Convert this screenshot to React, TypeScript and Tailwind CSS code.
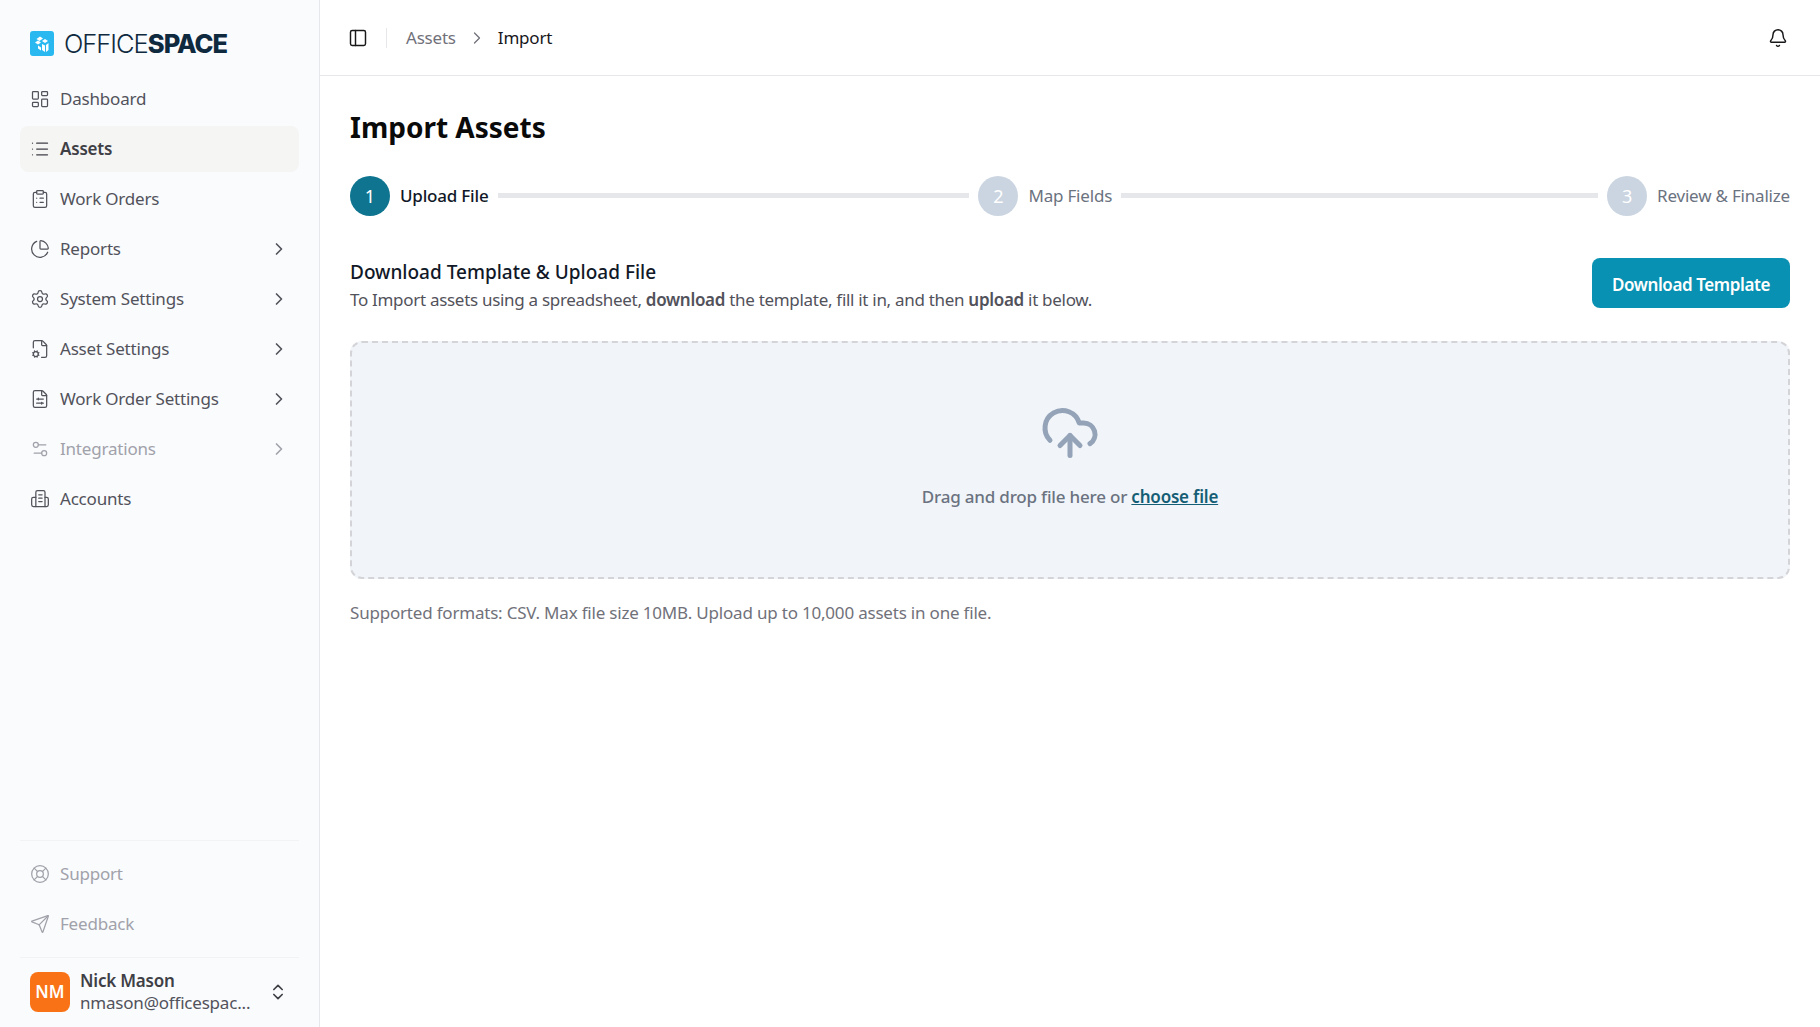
import {
  Bell,
  ChevronRight,
  ChevronsUpDown,
  ClipboardList,
  CloudUpload,
  FileCog,
  FileSliders,
  LayoutDashboard,
  LifeBuoy,
  List,
  PanelLeft,
  PieChart,
  Send,
  Settings,
  Settings2,
} from 'lucide-react';

function AccountsIcon({ className }: { className?: string }) {
  return (
    <svg viewBox="0 0 24 24" className={className} fill="none" stroke="currentColor" strokeWidth={1.5} strokeLinecap="round" strokeLinejoin="round">
      <path d="M7 21V4a2 2 0 0 1 2-2h7a2 2 0 0 1 2 2v17z" />
      <path d="M7 10H4a2 2 0 0 0-2 2v7a2 2 0 0 0 2 2h3" />
      <path d="M18 10h2a2 2 0 0 1 2 2v7a2 2 0 0 1-2 2h-2" />
      <path d="M10.5 7h4M10.5 11h4M10.5 15h4" />
    </svg>
  );
}

const navItems = [
  { label: 'Dashboard', icon: LayoutDashboard },
  { label: 'Assets', icon: List, active: true },
  { label: 'Work Orders', icon: ClipboardList },
  { label: 'Reports', icon: PieChart, arrow: true },
  { label: 'System Settings', icon: Settings, arrow: true },
  { label: 'Asset Settings', icon: FileCog, arrow: true },
  { label: 'Work Order Settings', icon: FileSliders, arrow: true },
  { label: 'Integrations', icon: Settings2, arrow: true, muted: true },
  { label: 'Accounts', icon: AccountsIcon },
];

function Logo() {
  return (
    <div className="flex h-[25px] items-center gap-[10px] pl-[30px]">
      <div className="flex h-[25px] w-[24px] items-center justify-center rounded-[3px] bg-[#29b9f0]">
        <svg viewBox="0 0 16 18" className="h-[18px] w-[16px]" fill="#fff">
          <path d="M2.5 4 6 1.5 9 3.5 5.5 6z" />
          <path d="M1 7.5 4 5.5 7 7.5 4 9.5z" />
          <path d="M8 6l3-2 3 2-3 2z" />
          <path d="M4 10.5l3 2v3l-3-2z" />
          <path d="M8 9l3 1.5v6.5L8 15z" />
          <path d="M12 10l2.5-2v7L12 17z" />
        </svg>
      </div>
      <div className="flex text-[25.5px] leading-none tracking-[-1px] text-[#0f2a3f] font-['Inter',sans-serif]">
        <span className="font-light">OFFICE</span>
        <span className="font-extrabold">SPACE</span>
      </div>
    </div>
  );
}

function NavRow({ item }: { item: any }) {
  const Icon = item.icon;
  return (
    <div
      className={`flex h-[46px] items-center rounded-lg pl-[10px] pr-[10px] text-[17px] tracking-[-0.2px] ${
        item.active ? 'bg-[#f5f5f4] font-semibold text-[#3f3f46]' : item.muted ? 'text-[#a1a1aa]' : 'text-[#52525b]'
      }`}
    >
      <Icon className="h-5 w-5 shrink-0" strokeWidth={1.5} />
      <span className="ml-[10px] flex-1">{item.label}</span>
      {item.arrow && <ChevronRight className="h-5 w-5" strokeWidth={2} />}
    </div>
  );
}

function Step({ n, label, active }: { n: number; label: string; active?: boolean }) {
  return (
    <div className="flex shrink-0 items-center gap-[10px]">
      <div
        className={`flex h-10 w-10 items-center justify-center rounded-full text-[18px] text-white ${
          active ? 'bg-[#0e7490]' : 'bg-[#cbd5e1]'
        }`}
      >
        {n}
      </div>
      <span className={`text-[17px] tracking-[-0.2px] ${active ? 'font-medium text-[#111827]' : 'text-[#6b7280]'}`}>{label}</span>
    </div>
  );
}

export default function App() {
  return (
    <div className="flex h-[1027px] w-[1820px] overflow-hidden bg-white font-['Noto_Sans',sans-serif]">
      <aside className="flex w-[320px] shrink-0 flex-col border-r border-[#e5e7eb] bg-[#f9fbfd]">
        <div className="pt-[31px]">
          <Logo />
        </div>
        <nav className="mt-[20px] flex flex-col gap-[4px] px-[20px]">
          {navItems.map((item) => (
            <NavRow key={item.label} item={item} />
          ))}
        </nav>
        <div className="mt-auto px-[20px]">
          <div className="flex flex-col gap-[6px] border-t border-[#f1f3f5] pt-[11px] pb-[11px] text-[17px] tracking-[-0.2px] text-[#a1a1aa]">
            <div className="flex h-[44px] items-center pl-[10px]">
              <LifeBuoy className="h-5 w-5" strokeWidth={1.5} />
              <span className="ml-[10px]">Support</span>
            </div>
            <div className="flex h-[44px] items-center pl-[10px]">
              <Send className="h-5 w-5" strokeWidth={1.5} />
              <span className="ml-[10px]">Feedback</span>
            </div>
          </div>
          <div className="flex h-[70px] items-center border-t border-[#f1f3f5] pl-[10px] pr-[11px] pb-[2px]">
            <div className="flex h-10 w-10 shrink-0 items-center justify-center rounded-lg bg-[#f97316] text-[17px] font-semibold text-white">
              NM
            </div>
            <div className="ml-[10px] w-[170px] shrink-0 pt-[1px] text-[17px] leading-[22px] tracking-[-0.2px]">
              <div className="font-semibold text-[#3f3f46]">Nick Mason</div>
              <div className="text-[#52525b]">nmason@officespac...</div>
            </div>
            <ChevronsUpDown className="ml-auto h-5 w-5 shrink-0 text-[#3f3f46]" strokeWidth={2} />
          </div>
        </div>
      </aside>

      <div className="flex min-w-0 flex-1 flex-col">
        <header className="flex h-[76px] shrink-0 items-center border-b border-[#e5e7eb] pl-[28px] pr-[32px] text-[17px] tracking-[-0.2px]">
          <PanelLeft className="h-5 w-5 text-[#18181b]" strokeWidth={1.75} />
          <div className="ml-[18px] mr-[19px] h-5 w-px bg-[#e5e7eb]" />
          <span className="text-[#71717a]">Assets</span>
          <ChevronRight className="mx-[11px] h-5 w-5 text-[#71717a]" strokeWidth={1.5} />
          <span className="text-[#18181b]">Import</span>
          <Bell className="ml-auto h-5 w-5 text-[#18181b]" strokeWidth={1.75} />
        </header>

        <main className="flex flex-col px-[30px] pt-[31px]">
          <h1 className="text-[28px] leading-[40px] font-bold text-[#0a0a0a]">Import Assets</h1>

          <div className="mt-[29px] flex items-center">
            <Step n={1} label="Upload File" active />
            <div className="mr-[9px] ml-[10px] mb-[1px] h-[5px] w-[471px] shrink-0 bg-[#e5e7eb]" />
            <Step n={2} label="Map Fields" />
            <div className="mx-[9px] mb-[1px] h-[5px] flex-1 bg-[#e5e7eb]" />
            <Step n={3} label="Review & Finalize" />
          </div>

          <div className="mt-[42px] flex items-start justify-between">
            <div className="pt-[1px]">
              <h2 className="text-[19px] leading-[27px] font-medium text-[#111827]">Download Template &amp; Upload File</h2>
              <p className="mt-[2px] text-[17px] leading-[24px] tracking-[-0.3px] text-[#52525b]">
                To Import assets using a spreadsheet, <b className="font-semibold">download</b> the template, fill it in, and then{' '}
                <b className="font-semibold">upload</b> it below.
              </p>
            </div>
            <button className="h-[50px] w-[198px] rounded-lg bg-[#0891b2] pt-[3px] text-[17px] font-semibold tracking-[-0.4px] text-white">
              Download Template
            </button>
          </div>

          <div className="mt-[29px] flex h-[238px] flex-col items-center rounded-xl border-2 border-dashed border-[#d4d4d8] bg-[#f1f5f9]">
            <CloudUpload className="mt-[60px] h-[60px] w-[60px] text-[#94a3b8]" strokeWidth={2} />
            <p className="mt-[21px] text-[17px] font-medium tracking-[-0.2px] text-[#6b7280]">
              Drag and drop file here or <span className="font-semibold text-[#155e75] underline">choose file</span>
            </p>
          </div>

          <p className="mt-[21px] text-[17px] tracking-[-0.2px] text-[#71717a]">
            Supported formats: CSV. Max file size 10MB. Upload up to 10,000 assets in one file.
          </p>
        </main>
      </div>
    </div>
  );
}
